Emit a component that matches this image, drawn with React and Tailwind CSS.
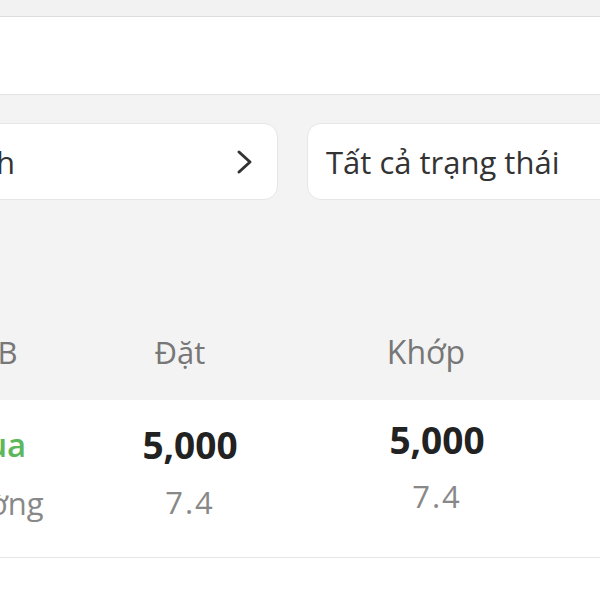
import React from 'react';

const ChevronRight = () => (
  <svg width="18" height="26" viewBox="0 0 18 26" fill="none" stroke="#333" strokeWidth="3" strokeLinecap="round" strokeLinejoin="round">
    <path d="M3 3l11 10-11 10" />
  </svg>
);

export default function App() {
  return (
    <div className="w-[600px] h-[600px] overflow-hidden bg-white text-[#333]" style={{ fontFamily: '"Open Sans", "Noto Sans", sans-serif' }}>
      <div className="h-[17px] bg-[#f2f2f2] border-b border-[#dcdcdc]" />
      <div className="h-[78px] bg-white border-b border-[#e2e2e2]" />

      <div className="bg-[#f3f3f3] pt-[28px] h-[305px]">
        <div className="flex gap-[29px] ml-[-230px]">
          <div className="w-[508px] h-[77px] shrink-0 bg-white rounded-[14px] border border-[#e6e6e6] flex items-center justify-end pr-[23px]">
            <span className="text-[31px] leading-[40px] whitespace-nowrap">Tất cả loại lệnh</span>
            <span className="w-[221px] shrink-0" />
            <ChevronRight />
          </div>
          <div className="w-[400px] h-[77px] shrink-0 bg-white rounded-[14px] border border-[#e6e6e6] flex items-center pl-[18px]">
            <span className="text-[31px] leading-[40px] whitespace-nowrap">Tất cả trạng thái</span>
          </div>
        </div>

        <div className="flex ml-[-120px] mt-[132px] text-[31px] leading-[40px] text-[#777]">
          <div className="w-[230px] shrink-0 text-center pr-[14px] whitespace-nowrap">M/B</div>
          <div className="w-[150px] shrink-0 text-center pr-[10px]">Đặt</div>
          <div className="w-[354px] shrink-0 text-center pr-[22px] text-[32px]">Khớp</div>
        </div>
      </div>

      <div className="h-[158px] bg-white border-b border-[#e6e6e6] flex ml-[-120px] pt-[25px]">
        <div className="w-[230px] shrink-0 flex flex-col items-center gap-[18px] pr-[8px]">
          <span className="text-[33px] leading-[40px] font-semibold text-[#5cb85c]">Mua</span>
          <span className="text-[31px] leading-[40px] text-[#888] whitespace-nowrap pr-[6px]">Thường</span>
        </div>
        <div className="w-[150px] shrink-0 flex flex-col items-center gap-[17px] pl-[10px]">
          <span className="text-[37px] leading-[40px] font-bold text-[#222] whitespace-nowrap">5,000</span>
          <span className="text-[31px] leading-[40px] text-[#888] tracking-[2px]">7.4</span>
        </div>
        <div className="w-[354px] shrink-0 flex flex-col items-center gap-[16px] -mt-[5px]">
          <span className="text-[37px] leading-[40px] font-bold text-[#222] whitespace-nowrap">5,000</span>
          <span className="text-[31px] leading-[40px] text-[#888] tracking-[2px]">7.4</span>
        </div>
      </div>
    </div>
  );
}
